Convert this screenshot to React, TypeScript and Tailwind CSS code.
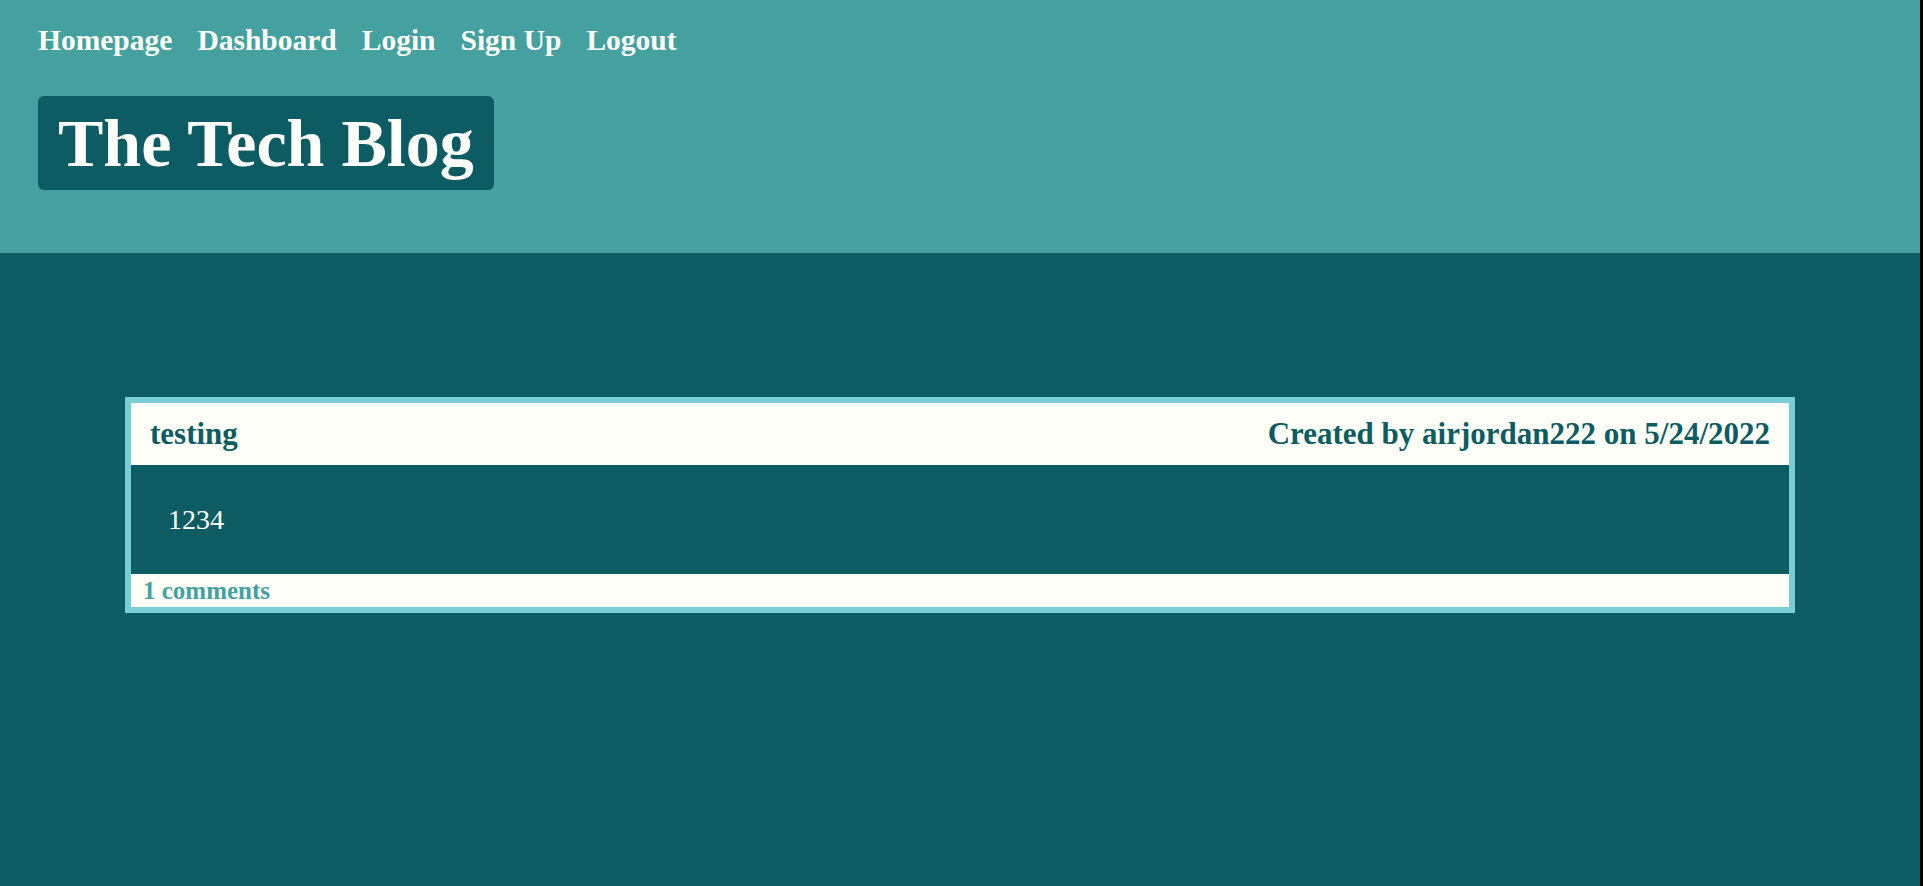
const navLinks = ['Homepage', 'Dashboard', 'Login', 'Sign Up', 'Logout'];

const PostCard = () => {
    return (
        <div className="border-[6px] border-[#78cdd7]">
            <div className="flex h-[62px] items-center justify-between bg-[#fffffa] px-[19px] text-[31px] font-bold text-[#0d5c63]">
                <span>testing</span>
                <span>Created by airjordan222 on 5/24/2022</span>
            </div>
            <div className="flex h-[109px] items-center pl-[37px] text-[28px] text-[#fffffa]">
                1234
            </div>
            <div className="flex h-[33px] items-center bg-[#fffffa] pl-[12px] text-[25px] font-bold text-[#44a1a0]">
                1 comments
            </div>
        </div>
    );
};

export default function App() {
    return (
        <div
            className="flex min-h-[886px] w-full bg-black"
            style={{ fontFamily: '"Palatino Linotype", "Book Antiqua", Palatino, "Liberation Serif", serif' }}
        >
            <div className="flex flex-1 flex-col bg-[#0d5c63]">
                <header className="h-[253px] bg-[#44a1a0] pl-[38px] pt-[24px]">
                    <nav className="flex gap-[25px] text-[29.5px] font-bold leading-[32px] text-[#fffffa]">
                        {navLinks.map((link) => (
                            <a key={link} href="#">
                                {link}
                            </a>
                        ))}
                    </nav>
                    <div className="mt-[40px] flex">
                        <h1 className="flex h-[94px] items-center rounded-md bg-[#0d5c63] px-5 text-[68px] font-bold text-[#fffffa]">
                            The Tech Blog
                        </h1>
                    </div>
                </header>
                <main className="flex-1 px-[125px] pt-[144px]">
                    <PostCard />
                </main>
            </div>
            <div className="w-[3px] bg-black" />
        </div>
    );
}
